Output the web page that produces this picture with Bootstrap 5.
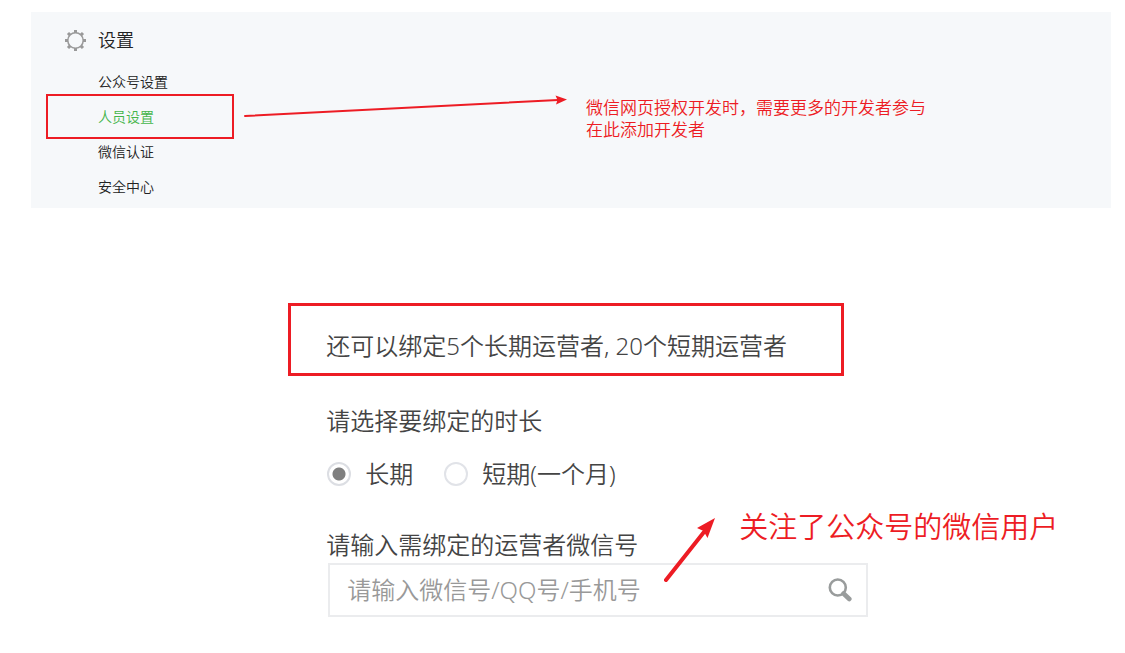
<!DOCTYPE html>
<html lang="zh-CN">
<head>
<meta charset="utf-8">
<meta name="viewport" content="width=device-width, initial-scale=1">
<title>人员设置</title>
<link href="https://cdn.jsdelivr.net/npm/bootstrap@5.3.0/dist/css/bootstrap.min.css" rel="stylesheet">
<style>
:root { --mark-red: #ed1c24; }
body { font-family: "Noto Sans", "Noto Sans CJK SC", sans-serif; font-weight: 350; color: #333; background: #fff; }
.settings-panel { background: #f6f8fa; margin: 12px 14px 0 31px; padding-bottom: 4px; }
.side-menu { width: 203px; padding-top: 10px; }
.side-title { height: 36px; margin-bottom: 6px; padding-left: 34px; gap: 12px; font-size: 18px; line-height: 36px; color: #222; }
.side-menu .nav-link { padding: 0 0 0 67px; font-size: 14px; line-height: 35px; color: #222; }
.side-menu .nav-link.active { position: relative; color: #44b549; }
.side-menu .nav-link.active::after { content: ""; position: absolute; inset: -5px 0 -5px 15px; border: 2px solid var(--mark-red); }
.note-text { color: var(--mark-red); }
.panel-note { font-size: 17px; line-height: 22px; margin: 85px 0 0 19px; }
.panel-arrow { margin: 82px 0 0 10px; }
.bind-form { margin-top: 95px; padding-left: 7px; font-size: 24px; line-height: 36px; color: #444; }
.quota-box { max-width: 556px; border: 3px solid var(--mark-red); padding: 22px 35px 9px; }
.form-body { padding-left: 38px; }
.term-title { margin-top: 27px; }
.term-choices { margin-top: 17px; padding-left: 1px; gap: 31px; }
.term-choices .form-check-input { width: 24px; height: 24px; margin: 0; border: 2px solid #e1e3e8; box-shadow: none; }
.term-choices .form-check-input:checked { background: radial-gradient(circle, #7f7f7f 6px, #fff 7px); border-color: #dcdee3; }
.term-choice { gap: 14px; }
.account-field { margin-top: 35px; max-width: 542px; }
.account-box { border: 2px solid #ebecee; height: 54px; margin-left: 2px; padding: 0 14px 0 17px; }
.account-box .form-control { font-size: 24px; line-height: 36px; font-weight: 350; color: #444; box-shadow: none; }
.account-box .form-control::placeholder { color: #999; opacity: 1; }
.account-note { left: 338px; top: -16px; gap: 24px; font-size: 29px; line-height: 32px; pointer-events: none; }
</style>
</head>
<body>
<section class="settings-panel d-flex align-items-start">
  <nav class="side-menu flex-shrink-0" aria-label="设置">
    <div class="side-title d-flex align-items-center">
      <svg width="21" height="21" viewBox="0 0 21 21" fill="none" stroke="#999" aria-hidden="true">
        <circle cx="10.500" cy="10.500" r="7.700" stroke-width="1.500"/>
        <path stroke-width="3" d="M10.500 0v3M10.500 18v3M0 10.500h3M18 10.500h3M3 3l2.100 2.100M15.900 15.900L18 18M18 3l-2.100 2.100M5.100 15.900L3 18"/>
      </svg>
      <span>设置</span>
    </div>
    <div class="nav flex-column">
      <a class="nav-link" href="#">公众号设置</a>
      <a class="nav-link active" aria-current="page" href="#">人员设置</a>
      <a class="nav-link" href="#">微信认证</a>
      <a class="nav-link" href="#">安全中心</a>
    </div>
  </nav>
  <svg class="panel-arrow flex-shrink-0" width="323" height="24" viewBox="0 0 323 24" aria-hidden="true">
    <path d="M1 22L314 6" stroke="#ed1c24" stroke-width="2" stroke-linecap="round"/>
    <path d="M323 5.500L311.500 1.500L313.500 6L312 10.500Z" fill="#ed1c24"/>
  </svg>
  <div class="panel-note note-text">微信网页授权开发时，需要更多的开发者参与<br>在此添加开发者</div>
</section>

<main class="row g-0">
  <form class="bind-form col-7 offset-3">
    <div class="quota-box">还可以绑定5个长期运营者, 20个短期运营者</div>
    <div class="form-body">
      <div class="term-title" id="term-title">请选择要绑定的时长</div>
      <div class="term-choices d-flex" role="radiogroup" aria-labelledby="term-title">
        <div class="term-choice d-flex align-items-center">
          <input class="form-check-input" type="radio" name="term" id="term-long" checked>
          <label for="term-long">长期</label>
        </div>
        <div class="term-choice d-flex align-items-center">
          <input class="form-check-input" type="radio" name="term" id="term-short">
          <label for="term-short">短期(一个月)</label>
        </div>
      </div>
      <div class="account-field position-relative">
        <label class="d-block" for="account">请输入需绑定的运营者微信号</label>
        <div class="account-box d-flex align-items-center">
          <input class="form-control border-0 p-0 bg-transparent" type="text" id="account" placeholder="请输入微信号/QQ号/手机号">
          <button class="btn border-0 p-0 d-flex" type="button" aria-label="搜索">
            <svg width="24" height="24" viewBox="0 0 24 24" fill="none" stroke="#999c9c" aria-hidden="true">
              <circle cx="9.800" cy="9.500" r="8" stroke-width="2.600"/>
              <path d="M15.500 15.500L21.300 21" stroke-width="4.600" stroke-linecap="round"/>
            </svg>
          </button>
        </div>
        <div class="account-note note-text position-absolute d-flex align-items-start text-nowrap">
          <svg width="51" height="72" viewBox="0 0 51 72" aria-hidden="true">
            <path d="M2 69L40 21" stroke="#ed1c24" stroke-width="4" stroke-linecap="round"/>
            <path d="M51 7L33 17L39.500 20L43.500 27Z" fill="#ed1c24"/>
          </svg>
          <span>关注了公众号的微信用户</span>
        </div>
      </div>
    </div>
  </form>
</main>
<script src="https://cdn.jsdelivr.net/npm/bootstrap@5.3.0/dist/js/bootstrap.bundle.min.js"></script>
</body>
</html>
